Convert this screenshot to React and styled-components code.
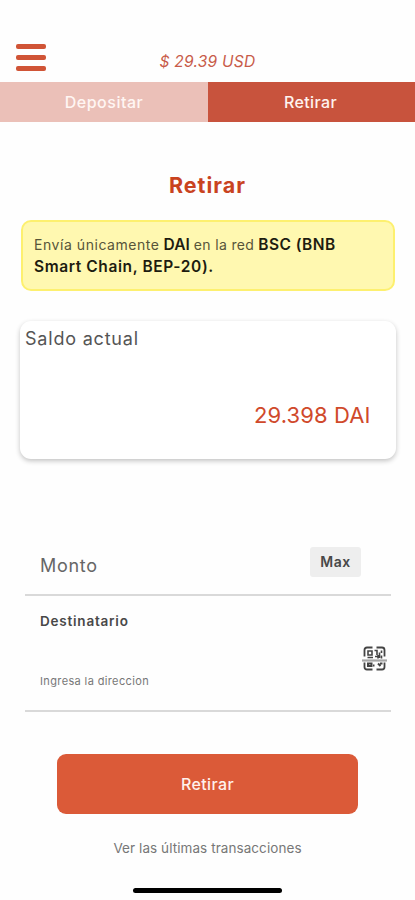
import React from 'react';
import styled, { createGlobalStyle } from 'styled-components';

const GlobalStyle = createGlobalStyle`
  :root {
    --primary: #db5a38;
    --primary-dark: #c8533d;
    --primary-soft: #ebc0b8;
    --accent-text: #c9431f;
    --line: #d9d9d9;
  }
  * { box-sizing: border-box; }
  body {
    margin: 0;
    background: #fefefe;
    font-family: Inter, 'Open Sans', sans-serif;
  }
  button { font-family: inherit; border: 0; padding: 0; cursor: pointer; }
`;

const Screen = styled.div`
  width: 100%;
  max-width: 415px;
  height: 900px;
  display: flex;
  flex-direction: column;
  overflow: hidden;
`;

const Text = styled.span`
  display: block;
  white-space: nowrap;
  font-size: ${({ $size }) => $size}px;
  line-height: ${({ $line }) => $line || 20}px;
  font-weight: ${({ $weight }) => $weight || 400};
  letter-spacing: ${({ $track }) => $track || 0}px;
  color: ${({ $color }) => $color || '#555'};
`;

const Header = styled.header`
  display: grid;
  grid-template-columns: 1fr auto 1fr;
  height: 82px;
  padding: 44px 16px 0;
`;

const MenuButton = styled.button`
  display: flex;
  flex-direction: column;
  justify-content: space-between;
  width: 30px;
  height: 27px;
  background: none;
`;

const MenuBar = styled.span`
  height: 5px;
  border-radius: 2px;
  background: #d05436;
`;

const Balance = styled(Text)`
  font-style: italic;
  padding-top: 8px;
`;

const Tabs = styled.nav`
  display: grid;
  grid-template-columns: 208px 1fr;
  height: 40px;
`;

const Tab = styled.button`
  display: flex;
  align-items: center;
  justify-content: center;
  background: ${({ $active }) => ($active ? 'var(--primary-dark)' : 'var(--primary-soft)')};
`;

const TabText = styled(Text)`
  margin-right: ${({ $shift }) => $shift || 0}px;
`;

const Title = styled.h1`
  margin: 50px 0 0;
  display: flex;
  justify-content: center;
`;

const Notice = styled.div`
  margin: 21px 20px 0 21px;
  height: 71px;
  padding: 12px 11px 0;
  border: 2px solid #fdf06f;
  border-radius: 10px;
  background: #fff8b0;
`;

const NoticeLine = styled.div`
  display: flex;
  gap: 4px;
`;

const Card = styled.section`
  display: flex;
  flex-direction: column;
  justify-content: space-between;
  margin: 30px 19.5px 0 20px;
  height: 138px;
  padding: 8px 25px 33px 5px;
  border-radius: 11px;
  background: #fff;
  box-shadow: 0 2px 5px rgba(0, 0, 0, 0.24);
`;

const Amount = styled(Text)`
  align-self: flex-end;
`;

const Form = styled.form`
  margin: 79px 24px 0 25px;
`;

const AmountRow = styled.div`
  display: flex;
  justify-content: space-between;
  align-items: flex-start;
  height: 58px;
  padding: 9px 30px 0 15px;
  border-bottom: 2px solid var(--line);
`;

const AmountLabel = styled(Text)`
  padding-top: 9px;
`;

const MaxButton = styled.button`
  width: 51px;
  height: 30px;
  display: flex;
  align-items: center;
  justify-content: center;
  border-radius: 3px;
  background: #eeeeee;
`;

const AddressRow = styled.div`
  display: flex;
  justify-content: space-between;
  height: 116px;
  padding: 15px 4px 0 15px;
  border-bottom: 2px solid var(--line);
`;

const AddressText = styled.div`
  display: flex;
  flex-direction: column;
  gap: 40px;
`;

const ScanButton = styled.button`
  width: 25px;
  height: 25px;
  margin-top: 35px;
  background: none;
`;

const Submit = styled.button`
  display: flex;
  align-items: center;
  justify-content: center;
  flex-shrink: 0;
  height: 60px;
  margin: 41.5px 57px 0;
  border-radius: 9px;
  background: var(--primary);
`;

const HistoryLink = styled.a`
  display: flex;
  justify-content: center;
  margin-top: 24px;
`;

const HomeIndicator = styled.div`
  width: 149px;
  height: 5px;
  margin: 30.5px auto 0 133px;
  border-radius: 3px;
  background: #000;
`;

const QrScanIcon = () => (
  <svg width="25" height="25" viewBox="0 0 25 25" fill="none" stroke="#444">
    <path d="M10.5 1.5H5Q2.5 1.5 2.5 4V10.5M14.5 1.5H20Q22.5 1.5 22.5 4V10.5M10.5 23.5H5Q2.5 23.5 2.5 21V16.5M14.5 23.5H20Q22.5 23.5 22.5 21V16.5" strokeWidth="1.8" />
    <path d="M6 5H10V9H6ZM12.5 4.5H15V9M13 10.5H15.5M17.5 6.5V12M19.5 4.5V7M5.5 11.5H11M16 9V12.5M19.5 9.5V12.5" strokeWidth="1.6" />
    <path d="M6 17.5H9.5V20H6ZM11 19.5H12.5M16 17.5L18.5 20M18 17.5H20.5" strokeWidth="2" />
    <path d="M0 14.5H25" stroke="#a6a6a6" strokeWidth="2.2" />
  </svg>
);

const App = () => (
  <>
    <GlobalStyle />
    <Screen>
      <Header>
        <MenuButton aria-label="Menú">
          <MenuBar />
          <MenuBar />
          <MenuBar />
        </MenuButton>
        <Balance $size={15.5} $track={0.25} $color="#c85b49">$ 29.39 USD</Balance>
      </Header>
      <Tabs>
        <Tab><TabText $size={16} $weight={500} $track={0.5} $color="#fff6f3">Depositar</TabText></Tab>
        <Tab $active><TabText $size={16} $weight={500} $track={0.35} $shift={2} $color="#fff3ef">Retirar</TabText></Tab>
      </Tabs>
      <Title>
        <Text $size={21.5} $line={27} $weight={700} $track={1} $color="var(--accent-text)">Retirar</Text>
      </Title>
      <Notice>
        <NoticeLine>
          <Text $size={14} $line={22} $track={0.55} $color="#57553a">Envía únicamente</Text>
          <Text $size={15.5} $line={22} $weight={600} $color="#1d1c10">DAI</Text>
          <Text $size={14} $line={22} $track={0.35} $color="#57553a">en la red</Text>
          <Text $size={15.5} $line={22} $weight={600} $track={0.45} $color="#1d1c10">BSC (BNB</Text>
        </NoticeLine>
        <Text $size={15.5} $line={22} $weight={600} $track={0.6} $color="#1d1c10">Smart Chain, BEP-20).</Text>
      </Notice>
      <Card>
        <Text $size={18} $track={0.8}>Saldo actual</Text>
        <Amount $size={22} $line={22} $track={0.1} $color="#d0492b">29.398 DAI</Amount>
      </Card>
      <Form>
        <AmountRow>
          <AmountLabel $size={18} $track={0.7} $color="#666">Monto</AmountLabel>
          <MaxButton type="button">
            <Text $size={14} $weight={600} $track={0.6} $color="#484848">Max</Text>
          </MaxButton>
        </AmountRow>
        <AddressRow>
          <AddressText>
            <Text $size={13.5} $weight={600} $track={0.78} $color="#484848">Destinatario</Text>
            <Text $size={11} $track={0.37} $color="#777">Ingresa la direccion</Text>
          </AddressText>
          <ScanButton type="button" aria-label="Escanear"><QrScanIcon /></ScanButton>
        </AddressRow>
      </Form>
      <Submit>
        <Text $size={16} $weight={500} $track={0.4} $color="#fff1ec">Retirar</Text>
      </Submit>
      <HistoryLink>
        <Text $size={13.5} $track={0.07} $color="#777">Ver las últimas transacciones</Text>
      </HistoryLink>
      <HomeIndicator />
    </Screen>
  </>
);

export default App;
